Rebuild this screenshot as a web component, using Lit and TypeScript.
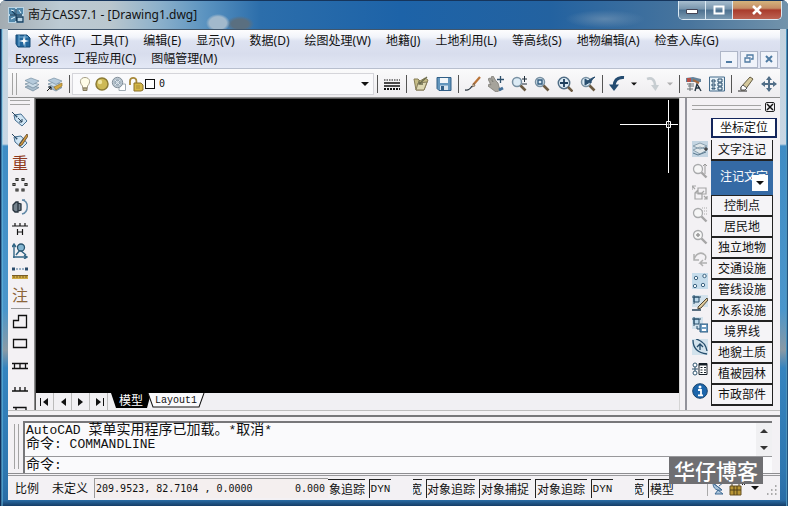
import { LitElement, html, css, svg, TemplateResult } from "lit";
import { customElement } from "lit/decorators.js";
import { classMap } from "lit/directives/class-map.js";

const lens = svg`<circle cx="6" cy="6" r="4.5" fill="#dcebf5" stroke="#7890a2" stroke-width="1.5"/><path d="M9.5 9.5l5 5" stroke="#6b5a42" stroke-width="2.6"/>`;
const greyLens = svg`<circle cx="6" cy="6" r="4.5" fill="#f6f6f6" stroke="#a9aaac" stroke-width="1.3"/><path d="M9.5 9.5l5 5" stroke="#a5a5a5" stroke-width="2.4"/>`;
const sheets = svg`<path d="M1 11l6-2 8 2.500-6 3.500z" fill="#a9bccb" stroke="#6f8799" stroke-width=".7"/><path d="M1 8l6-2 8 2.500-6 3.500z" fill="#cbdbe7" stroke="#6f8799" stroke-width=".7"/><path d="M1 4.500l6-2.500 8 3-6 3.500z" fill="#b5cadb" stroke="#7890a3" stroke-width=".7"/>`;
const tag = svg`<path d="M2 4l7-1 6 7-5 5-7-6z" fill="#cfe4f3" stroke="#466f91"/><path d="M0 1l4 4" stroke="#25445e"/><circle cx="4.500" cy="5.500" r="1" fill="#2b4a63"/>`;

const ICONS: Record<string, TemplateResult> = {
  app: svg`<path d="M0 0h16v16H0z" fill="#b9d4e5"/><path d="M1 1h6v6H1zM9 1h6v6H9zM1 9h6v6H1z" fill="#5187aa"/><path d="M2 8h12M8 2v12M4 4l3 3M9 10h6v5H9z" stroke="#163e5e" stroke-width="1.300" fill="none"/><path d="M3 3l3 1M11 3l2 3M3 12l4-2" stroke="#e6f6ff"/>`,
  doc: svg`<path d="M1 2h11l3 3v9H3l-2-3z" fill="#24679d" stroke="#164b77"/><path d="M4 2v11M4 4h9M10 2v12" stroke="#72add4"/><path d="M9 3l1 4 4 1-4 1-1 4-1-4-4-1 4-1z" fill="#fff"/>`,
  layers: sheets,
  layerprev: svg`${sheets}<path d="M7 11l8-4v3l-6 4z" fill="#d6a93f" stroke="#94722b" stroke-width=".7"/><path d="M0 15l4-4M1.500 11H4v3" stroke="#111" fill="none"/>`,
  bulb: svg`<path d="M5.500 10C2 6.500 3 1.500 8 1.500s6 5 2.500 8.500v2h-5z" fill="#fffde8" stroke="#a59e86"/><path d="M6 12h4v2.500H6z" fill="#b8b28d" stroke="#83795d"/>`,
  sun: svg`<circle cx="8" cy="8" r="6" fill="#cdb956" stroke="#8d7c35" stroke-width="1.500"/><circle cx="6" cy="6" r="2.200" fill="#efe4a1"/>`,
  freeze: svg`<path d="M8 8h6.500v6.500H8z" fill="#fff" stroke="#a0abb3"/><circle cx="6.500" cy="6.500" r="5.200" fill="#b8c4ce" stroke="#83909b"/><circle cx="6.500" cy="6.500" r="2.500" fill="none" stroke="#8fa0ae"/><path d="M4 4l5 5M9 4L4 9" stroke="#dde6ed"/>`,
  lock: svg`<path d="M2 9V5a3.200 3.200 0 0 1 6.400 0v3" fill="none" stroke="#a8893b" stroke-width="1.800"/><path d="M6 7h7l2 2v5l-2 1H6z" fill="#d4b747" stroke="#8a702b"/><path d="M8 10h4M8 12h4" stroke="#a98c3a"/>`,
  linetype: svg`<path d="M0 4h16" stroke="#111" stroke-dasharray="1.500 1"/><path d="M0 7h16M0 10h16" stroke="#111" stroke-width="1.500"/><path d="M0 13h16" stroke="#111" stroke-width="2" stroke-dasharray="2 1"/>`,
  open: svg`<path d="M1 3h4l2 2 5-3 3 2-4 10H3z" fill="#c5bc86" stroke="#867d55"/><path d="M3 14l2-7 9-1-3 8z" fill="#ddd8b2" stroke="#847b5b"/><path d="M14 1L6 8M6 4.500V8h4" fill="none" stroke="#6b6c4f" stroke-width="1.300"/>`,
  save: svg`<path d="M1 1.500h14v13H3l-2-2z" fill="#6396bd" stroke="#315f87"/><path d="M4 2h8v5H4z" fill="#f2f6f9"/><path d="M4 9.500h8V14H4z" fill="#d8e4ee"/><path d="M5 10h3v4H5z" fill="#315f87"/>`,
  brush: svg`<path d="M15 1L8 9" stroke="#b97337" stroke-width="2.300"/><path d="M9 7l-2 4 3-1z" fill="#dec3a0" stroke="#5f5041" stroke-width=".6"/><path d="M0 14q4 1 7-4" stroke="#2e3943" stroke-width="1.300" fill="none"/>`,
  pan: svg`<path d="M0 3l2-1 3 4-2-5 2-1 3 5 2 2 1 4 2 3-5 2-4-3-4-3 1-2 2 1z" fill="#a6a39b" stroke="#7c7b75" stroke-width=".8"/><path d="M12.500 0v7M9 3.500h7" stroke="#30516c" stroke-width="1.300"/><path d="M11 14l4-2" stroke="#436f99" stroke-width="3"/>`,
  zoomrt: svg`${lens}<path d="M11 3h5M13.500 0v6M11 8h5" stroke="#1f2d39"/>`,
  zoomwin: svg`${lens}<path d="M4 4h4v4H4z" fill="none" stroke="#315b7e" stroke-width="1.400"/>`,
  zoomext: svg`<circle cx="7" cy="7" r="5.700" fill="#dcebf5" stroke="#506d85" stroke-width="1.500"/><path d="M11 11l4.500 4.500" stroke="#6b5a42" stroke-width="2.500"/><path d="M3 7h8M7 3v8" stroke="#1d3f5e" stroke-width="1.800"/>`,
  zoomprev: svg`${lens}<path d="M5 9l0-6 3 2c2-2 4-3 7-4-3 2-4 4-4 6l-1-1z" fill="#294f70" stroke="#294f70"/>`,
  undo: svg`<path d="M15 1.500C9 1 5.500 4 5 10" fill="none" stroke="#244b70" stroke-width="3"/><path d="M0 8.500h10L5 15z" fill="#244b70"/>`,
  redo: svg`<path d="M3 3c5-2 8 1 8 7" fill="none" stroke="#c7cdd1" stroke-width="2.500"/><path d="M7 9h8l-3.500 6z" fill="#c7cdd1"/>`,
  match: svg`<path d="M0 2l7-1 8 2v3H0z" fill="#65839b"/><path d="M1 2h4v4H1z" fill="#b85148"/><path d="M1 8h7M2 10h6M1 13h6M4 7v8" stroke="#6d7479"/><path d="M9 15l2-7 4 7M10 12h4" stroke="#273642" stroke-width="1.400" fill="none"/><path d="M7 4l6 3" stroke="#a76b40" stroke-width="2"/>`,
  props: svg`<path d="M.5 1h15v14H.5z" fill="#e8f2f8" stroke="#436b8b"/><path d="M3 4h3v2H3zM3 8h3v2H3zM3 12h3v1H3zM9 3h4v3H9zM9 7h4v3H9zM9 11h4v3H9z" fill="none" stroke="#254a6a"/>`,
  erase: svg`<path d="M0 15h9" stroke="#252525"/><path d="M3 11L12 1l3 2-8 11H3z" fill="#d6c99d" stroke="#655d43"/><path d="M3 11l2-2 4 3-2 2H3z" fill="#fff" stroke="#555"/>`,
  move: svg`<path d="M8 1v14M1 8h14" stroke="#526f88" stroke-width="2"/><path d="M8 0l3 4H5zM8 16l3-4H5zM0 8l4-3v6zM16 8l-4-3v6z" fill="#526f88"/>`,
  tag: svg`${tag}<path d="M6 7l4 4M10 8v3H7" stroke="#243f57" fill="none"/>`,
  tagpen: svg`${tag}<path d="M15 1L8 10l-1 3 3-1 6-9z" fill="#d39a3c" stroke="#593d21" stroke-width=".8"/><path d="M8 11l4-6" stroke="#555" />`,
  ring: svg`<g fill="none" stroke="#2a2a27" stroke-width="1.200"><path d="M4 1.500h2v2H4zM10 1.500h2v2h-2zM1 6.500h2v2H1zM13 6.500h2v2h-2zM4 12h2v2H4zM10 12h2v2h-2z"/></g>`,
  orbit: svg`<path d="M1 6l3-3h2v10H3L1 11zM6 4l3 1v6l-3 1z" fill="#75828d" stroke="#26323d" stroke-width="1.300"/><path d="M10 1c7 1 7 12 0 14M10 15l3-1M10 1h3" stroke="#6289a7" stroke-width="1.500" fill="none"/>`,
  hdim: svg`<path d="M0 5h16M3 2v3M8 2v3M13 2v3M5.500 8v6M10.500 8v6M5.500 11h5" stroke="#151515" stroke-width="1.200" fill="none"/>`,
  axis: svg`<path d="M2 15V2M1 14h14M0 4l2-3 2 3M12 12l3 2-3 2" stroke="#326585" fill="none" stroke-width="1.400"/><path d="M4 12L8 7l6 5" stroke="#326585" stroke-width="1.500" fill="none"/><circle cx="9" cy="4.500" r="3.500" fill="#83b5d1" stroke="#28536e" stroke-width="1.300"/>`,
  ruler: svg`<path d="M0 4h3M13 4h3" stroke="#2b4b6b" stroke-width="3"/><path d="M4 4h8" stroke="#497499" stroke-dasharray="2 1"/><path d="M0 10h16v4H0z" fill="#d0ab43"/><path d="M0 10.500h16M2 10v3M5 10v3M8 10v3M11 10v3M14 10v3" stroke="#795c26"/>`,
  poly: svg`<path d="M1.500 6.500h5v-5h8v12h-13z" fill="none" stroke="#111" stroke-width="1.300"/>`,
  rect: svg`<path d="M1.500 3.500h13v8h-13z" fill="none" stroke="#111" stroke-width="1.300"/>`,
  rail: svg`<path d="M0 5.500h16M0 10.500h16M2.500 5v6M8 5v6M13.500 5v6" stroke="#111" stroke-width="1.300"/>`,
  comb: svg`<path d="M0 11h16M3 7v4M8 7v4M13 7v4" stroke="#111" stroke-width="1.300"/>`,
  bench: svg`<path d="M1 5.500h13V13M4 6v5M1 9.500h4" stroke="#111" stroke-width="1.300" fill="none"/>`,
  stack: svg`<path d="M0 0h16v16H0z" fill="#c4d5e2"/><path d="M1 5l7-3 7 3-7 3zM1 9l7-3 7 3-7 4z" fill="#e0e7ea" stroke="#899fae"/><path d="M1 12l5 2 8-3" stroke="#59788e" fill="none"/><path d="M12 8h4M14 6v4" stroke="#222"/>`,
  gz1: svg`${greyLens}<path d="M13 2v9M11 3l2-2 2 2" stroke="#999" fill="none"/>`,
  gbox: svg`<path d="M6 3h8v6H6zM3 8h7v6H3zM3 8l3-3M10 8l2-2M0 5V1h4M0 1l3 3M12 11l3 3M15 11v3h-3" fill="none" stroke="#a5a5a5" stroke-width="1.200"/>`,
  gz2: svg`${greyLens}<path d="M10 1h6M10 4h6M12 7h4" stroke="#aaa" stroke-dasharray="1 1"/>`,
  gz3: svg`${greyLens}<path d="M4 6h4M6 4v4" stroke="#999" stroke-width="1.500"/>`,
  gturn: svg`<path d="M2 3v6h5M2 9C3 3 9 0 13 4c1 1 1 3 0 5M15 12H8l3-3M8 12l3 3" fill="none" stroke="#b0b0b0" stroke-width="1.500"/>`,
  nodes: svg`<path d="M0 0h16v16H0z" fill="#c5dceb"/><g fill="#f5fafd" stroke="#3c6380"><circle cx="4" cy="5" r="1.700"/><circle cx="12.500" cy="3" r="1.700"/><circle cx="3" cy="13" r="1.700"/><circle cx="11" cy="12" r="1.700"/></g>`,
  edit: svg`<path d="M0 0h16v12H0z" fill="#d3e2ec"/><path d="M2 2h5v5H2zM0 2h9M2 0v9" fill="#bdd9eb" stroke="#274c68"/><path d="M15 3L6 12v2l3-1 7-8z" fill="#dfc99a" stroke="#4f4532"/><path d="M0 15h9" stroke="#28445c" stroke-width="1.500"/>`,
  blocksave: svg`<path d="M0 0h11v12H0z" fill="#d3e2ec"/><path d="M2 2h5v5H2zM0 2h9M2 0v9M5 9v3h3" fill="#bdd9eb" stroke="#274c68"/><path d="M8 7h8v8H8z" fill="#709fc4" stroke="#2c5c82"/><path d="M10 8h4v2h-4zM10 12h4v2h-4z" fill="#fff"/>`,
  curve: svg`<path d="M0 0h16v16H0z" fill="#d2e2ec"/><path d="M1 1c0 9 5 13 14 14M4 0c7 2 10 6 11 12M8 11V5M5 8l3-3 3 3" fill="none" stroke="#254d6c" stroke-width="1.300"/>`,
  list: svg`<circle cx="3" cy="4" r="2" fill="#fff" stroke="#31556f"/><circle cx="3" cy="12" r="2" fill="#fff" stroke="#31556f"/><path d="M3 6v4M0 8h6" stroke="#31556f"/><path d="M7 2.500h8v11H7z" fill="#fff" stroke="#171f27"/><path d="M7 3.500h8" stroke="#171f27" stroke-width="2"/><path d="M8.500 6.500h2M12 6.500h2M8.500 9h2M12 9h2M8.500 11.500h2M12 11.500h2" stroke="#171f27"/>`,
  info: svg`<circle cx="8" cy="8" r="7.300" fill="#1d66ac" stroke="#18446d"/><circle cx="8" cy="4" r="1.500" fill="#fff"/><path d="M6 7h3v5M6 12.300h5" stroke="#fff" stroke-width="1.800" fill="none"/>`,
  dish: svg`<path d="M2 3c0 6 4 8 9 7zM2 3l9 7M8 6l5-4M7 10l-3 4h8z" fill="#a9c4dc" stroke="#3f6b94"/><circle cx="13" cy="2.500" r="1.500" fill="#4379ab"/>`,
  tray: svg`<path d="M1 6h11v9H1z" fill="#b99635" stroke="#695222"/><path d="M3 6V3h7v3M5 6v9M8 6v9M1 10h11" stroke="#504019" fill="none"/><path d="M13.500 2v3M15.500 2v3" stroke="#222"/>`,
  down: svg`<path d="M4 6h8l-4 4z" fill="#111"/>`,
};

const icon = (name: string) => html`<svg class="icon" viewBox="0 0 16 16" aria-hidden="true">${ICONS[name]}</svg>`;

const MENUS = [
  "文件(F)", "工具(T)", "编辑(E)", "显示(V)", "数据(D)", "绘图处理(W)", "地籍(J)", "土地利用(L)",
  "等高线(S)", "地物编辑(A)", "检查入库(G)", "Express", "工程应用(C)", "图幅管理(M)",
];

const TOOLS = [
  "linetype", "|", "open", "save", "|", "brush", "pan", "zoomrt", "zoomwin", "zoomext", "zoomprev", "|",
  "undo", "v", "redo", "v-", "|", "match", "props", "|", "erase", "move",
];

const LEFT = ["tag", "tagpen", "重", "ring", "orbit", "hdim", "axis", "ruler", "注", "|", "poly", "rect", "rail", "comb", "bench"];
const RIGHT = ["stack", "gz1", "gbox", "gz2", "gz3", "gturn", "nodes", "edit", "blocksave", "curve", "list", "info"];
const LAYERS = ["控制点", "居民地", "独立地物", "交通设施", "管线设施", "水系设施", "境界线", "地貌土质", "植被园林", "市政部件"];

@customElement("app-root")
export class AppRoot extends LitElement {
  static styles = css`
    :host {
      display: block;
      font: 12px/16px "Noto Sans", "Noto Sans CJK SC", sans-serif;
      color: #111;
    }
    * { box-sizing: border-box; }
    button, select, input { font: inherit; color: inherit; margin: 0; padding: 0; border: 0; border-radius: 0; background: none; }
    .icon { width: 16px; height: 16px; flex: none; display: block; }
    .window {
      height: 100vh;
      display: flex;
      flex-direction: column;
      padding: 0 8px 6px;
      border-radius: 6px 6px 0 0;
      overflow: hidden;
      position: relative;
      background:
        linear-gradient(90deg, #12305a 1px, #6cc3e8 2px, transparent 3px, transparent calc(100% - 2px), #5cb4dd calc(100% - 2px), #12305a),
        linear-gradient(#a8bac8 0, #c3d3df 30px, #c8d7e4 144px, #3f8cc4 146px, #4b96cb 310px, #8a9aa5 350px, #3584bf 368px, #2e77b0 470px, #2a6da6 500px, #143c66);
    }
    .title {
      height: 29px;
      flex: none;
      display: flex;
      align-items: center;
      gap: 4px;
      margin: 0 -8px;
      padding: 0 6px 0 8px;
      border-top: 1px solid #16355c;
      background:
        radial-gradient(ellipse 12px 9px at 218px 22px, #a2b9cc 70%, transparent),
        radial-gradient(ellipse 14px 8px at 240px 23px, #5a6f80 60%, transparent),
        radial-gradient(ellipse 40px 9px at 605px 18px, #5d86ad, transparent),
        linear-gradient(90deg, #a3acb2 0, #bccad3 60px, #bac7ce 110px, #8bb0cb 160px, #5b93c0 205px, #2c6eab 260px, #1d63a8 400px, #2362a0 550px, #49759d 690px, #7293ab);
    }
    .title h1 { flex: 1; margin: 0; font-size: 12px; font-weight: 400; }
    .caption { align-self: flex-start; display: flex; height: 19px; border: 1px solid #dbe9f3; border-top: 0; border-radius: 0 0 5px 5px; overflow: hidden; }
    .caption button { width: 27px; display: grid; place-items: center; border-right: 1px solid #dbe9f3; background: linear-gradient(#a7bdce, #7895ad 45%, #4c708f 50%, #7b9ab2); }
    .caption .close { width: 48px; border: 0; background: linear-gradient(#d4b37c, #c58d65 40%, #a93b2c 50%, #bd6353); }
    .client { flex: 1; min-height: 0; display: flex; flex-direction: column; background: #f3f1f4; border-top: 1px solid #41566b; }
    .menu {
      flex: none;
      display: flex;
      flex-wrap: wrap;
      column-gap: 15px;
      align-items: center;
      padding: 2px 12px 0 7px;
      min-height: 39px;
      background: linear-gradient(#fdfdfe 0, #f2f4fa 7px, #dde2f1 11px, #d8dded 24px, #e3e8f5);
      border-bottom: 1px solid #b8bfce;
    }
    .menu button { line-height: 18px; white-space: nowrap; }
    .first { display: flex; align-items: center; gap: 7px; }
    .mdi { margin: 0 -10px 0 auto; display: flex; gap: 2px; }
    .mdi button { width: 18px; height: 17px; display: grid; place-items: center; border: 1px solid #aeb6c8; background: #f0f3fa; }
    .tools { flex: none; height: 29px; display: flex; align-items: center; padding-top: 1px; background: linear-gradient(#fafafb, #eeecef); border-bottom: 1px solid #8e8e8e; }
    .grip { width: 5px; height: 22px; margin: 0 3px 0 4px; border: solid #a3a3a3; border-width: 0 1px; flex: none; }
    .tool { width: 23px; height: 22px; flex: none; display: grid; place-items: center; }
    .drop { width: 12px; height: 22px; flex: none; display: grid; place-items: center; }
    .drop.off { opacity: .3; width: 13px; }
    .drop .icon { width: 12px; height: 12px; }
    .sep { width: 6px; height: 18px; flex: none; display: flex; justify-content: center; }
    .sep::before { content: ""; width: 1px; background: #555; }
    .combo { flex: 1; min-width: 0; height: 22px; display: flex; align-items: center; gap: 1px; padding: 0 0 0 4px; background: #fafafc; border: 1px solid #d5d5da; }
    .swatch { width: 10px; height: 10px; border: 1px solid #111; background: #fff; flex: none; }
    .combo select { flex: 1; min-width: 0; height: 20px; padding-left: 3px; appearance: none; font: 10px "DejaVu Sans Mono", monospace; }
    .main { flex: 1; min-height: 0; display: flex; border-bottom: 1px solid #bdbdbd; }
    .left { width: 27px; flex: none; overflow: hidden; display: flex; flex-direction: column; align-items: center; padding-right: 2px; border-right: 1px solid #8b8b8b; }
    .left button { height: 22px; flex: none; display: grid; place-items: center; }
    .left .glyph { font-size: 16px; line-height: 22px; color: #8f3a20; }
    .left .ochre { color: #8b6539; }
    .hgrip { width: 20px; height: 5px; margin: 2px 0 3px; border: solid #a3a3a3; border-width: 1px 0; flex: none; }
    .rule { width: 19px; height: 1px; margin: 2px 0; background: #999; flex: none; }
    .stage { flex: 1; min-width: 0; display: flex; flex-direction: column; border-left: 1px solid #555; }
    .canvas { flex: 1; min-height: 0; position: relative; background: #000; border-top: 1px solid #555; }
    .cross { position: absolute; right: 0; top: 1px; width: 60px; height: 74px; }
    .tabs { height: 17px; flex: none; display: flex; align-items: stretch; background: #f1f0f3; }
    .nav { width: 18px; border-right: 1px solid #bbb; display: grid; place-items: center; }
    .nav .icon, .arrows .icon { width: 12px; height: 12px; }
    .tab { position: relative; height: 15px; padding: 0 8px; line-height: 15px; }
    .tab svg { position: absolute; inset: 0; width: 100%; height: 100%; }
    .tab span { position: relative; }
    .tab.on { margin-left: 3px; color: #fff; }
    .tab.sheet { margin-left: -4px; font: 10px/15px "Liberation Mono", monospace; }
    .right { width: 101px; flex: none; padding: 0 4px 0 5px; display: flex; flex-direction: column; border-left: 1px solid #d5d5d5; }
    .dock { display: flex; flex-direction: column; padding-left: 5px; border-left: 2px solid #92929a; flex: 1; min-height: 0; }
    .head { display: flex; gap: 4px; align-items: center; height: 18px; flex: none; padding-right: 1px; }
    .head i { flex: 1; height: 5px; border: solid #a3a3a3; border-width: 1px 0; }
    .head button { width: 10px; height: 10px; border: 1px solid #222; border-radius: 2px; display: grid; place-items: center; }
    .head .icon { width: 8px; height: 8px; }
    .cols { display: flex; gap: 3px; }
    .icons { display: flex; flex-direction: column; padding-top: 22px; }
    .icons button { height: 22px; width: 16px; display: grid; place-items: center; }
    .list { width: 62px; display: flex; flex-direction: column; padding-top: 2px; }
    .list button { height: 21px; flex: none; text-align: center; line-height: 18px; background: #f5f4f7; border: 1px solid #222; border-width: 0 1px 2px 1px; white-space: nowrap; }
    .list .lead { width: 66px; height: 20px; margin-bottom: 2px; border: 2px solid #14265c; border-top-width: 1px; background: #fff; }
    .pick { position: relative; height: 35px; flex: none; }
    .pick select { width: 100%; height: 100%; appearance: none; padding: 0 0 2px 9px; background: #356aa5; color: #fff; border-bottom: 1px solid #222; }
    .pick .arrow { position: absolute; right: 5px; bottom: 5px; width: 16px; height: 16px; background: #fff; pointer-events: none; }
    .command { flex: none; height: 59px; margin-top: 4px; display: flex; padding: 4px 8px 0 2px; border-top: 2px solid #77777a; border-bottom: 1px solid #8d8d90; font: 13px/14px "Liberation Mono", "Noto Sans CJK SC", monospace; }
    .command .grip { height: auto; margin: 3px 4px 4px; }
    .cli { flex: 1; min-width: 0; display: flex; flex-direction: column; background: #fafafc; border: solid #77777a; border-width: 2px 0 0 2px; }
    .log { height: 34px; flex: none; display: flex; border-bottom: 1px solid #98989b; }
    .log output { flex: 1; white-space: pre; padding-left: 1px; }
    .cjk { font-size: 14px; }
    .log div { height: 14px; }
    .arrows { width: 16px; display: flex; flex-direction: column; justify-content: space-around; align-items: center; background: #f0f0f2; }
    .prompt { flex: 1; display: flex; align-items: center; padding-left: 1px; }
    .prompt input { flex: 1; min-width: 0; height: 14px; outline: 0; }
    .status { flex: none; height: 25px; display: flex; align-items: center; gap: 4px; padding: 2px 3px 2px 7px; margin-top: 1px; border-top: 1px solid #98989b; font-family: "Noto Sans CJK SC", sans-serif; }
    .status .scale { margin-right: 9px; }
    .coords { flex: 1; min-width: 0; height: 20px; margin: 0 -4px 0 2px; display: flex; justify-content: space-between; align-items: center; overflow: hidden; white-space: pre; padding: 0 3px 0 1px; border: solid #999; border-width: 1px 0 0 1px; font: 10px/16px "DejaVu Sans Mono", monospace; background: #f4efef; }
    .flag { height: 19px; flex: none; overflow: hidden; display: flex; justify-content: flex-end; align-items: center; white-space: nowrap; border: solid #222; border-width: 1px 0 0 1px; padding: 0 2px 0 1px; }
    .flag.mono { width: 22px; padding: 0; justify-content: center; font: 11px "Liberation Mono", monospace; }
    .w4 { width: 52px; }
    .w3 { width: 37px; border-left: 0; padding: 0; }
    .cut { width: 49px; padding: 0; }
    .w1 { width: 9px; margin-left: 18px; border-left: 0; padding: 0; }
    .w2 { width: 28px; }
    .tray { margin-left: 27px; display: flex; align-items: center; gap: 2px; padding-left: 3px; border-left: 1px solid #aaa; }
    .mark { position: absolute; right: 25px; bottom: 22px; height: 27px; padding: 0 5px; background: #6f6f72; color: #fff; font: 500 21px/26px "Noto Sans CJK SC", sans-serif; }
  `;

  private tool(name: string) {
    if (name === "|") return html`<span class="sep"></span>`;
    if (name[0] === "v") {
      return html`<button class=${classMap({ drop: true, off: name === "v-" })} aria-label="more">${icon("down")}</button>`;
    }
    return html`<button class="tool" aria-label=${name}>${icon(name)}</button>`;
  }

  private side(name: string) {
    if (name === "|") return html`<span class="rule"></span>`;
    const glyph = !(name in ICONS);
    return html`<button class=${classMap({ glyph, ochre: name === "注" })} aria-label=${name}>${glyph ? name : icon(name)}</button>`;
  }

  private flag(text: string, kind: string) {
    return html`<button class="flag ${kind}">${text}</button>`;
  }

  private nav(d: string, label: string) {
    return html`<button class="nav" aria-label=${label}><svg class="icon" viewBox="0 0 12 12"><path d=${d} fill="#111" /></svg></button>`;
  }

  render() {
    return html`
      <div class="window">
        <header class="title">
          ${icon("app")}
          <h1>南方CASS7.1 - [Drawing1.dwg]</h1>
          <div class="caption">
            <button aria-label="minimize"><svg width="12" height="10"><path d="M.5 4.500h11v4H.5z" fill="#fff" stroke="#445" /></svg></button>
            <button aria-label="maximize"><svg width="12" height="10"><path d="M1.500 1.500h9v7h-9z" fill="none" stroke="#fff" stroke-width="2" /></svg></button>
            <button class="close" aria-label="close"><svg width="12" height="10"><path d="M2 1l8 8M10 1L2 9" stroke="#fff" stroke-width="2.500" /></svg></button>
          </div>
        </header>
        <div class="client">
          <nav class="menu">
            ${MENUS.map((m, i) => (i ? html`<button>${m}</button>` : html`<span class="first">${icon("doc")}<button>${m}</button></span>`))}
            <span class="mdi">
              <button aria-label="minimize drawing"><svg width="10" height="10"><path d="M2 8h6" stroke="#4f7ba3" stroke-width="2" /></svg></button>
              <button aria-label="restore drawing"><svg width="10" height="10"><path d="M1 4h5v4H1zM3 3V1h6v4H7" fill="none" stroke="#4f7ba3" stroke-width="1.300" /></svg></button>
              <button aria-label="close drawing"><svg width="10" height="10"><path d="M2 2l6 6M8 2L2 8" stroke="#4f7ba3" stroke-width="2" /></svg></button>
            </span>
          </nav>
          <div class="tools">
            <span class="grip"></span>
            ${this.tool("layers")}${this.tool("layerprev")}${this.tool("|")}
            <div class="combo">
              ${["bulb", "sun", "freeze", "lock"].map(icon)}
              <span class="swatch"></span>
              <select aria-label="图层"><option>0</option></select>
              ${icon("down")}
            </div>
            ${this.tool("|")}${TOOLS.map((t) => this.tool(t))}
          </div>
          <div class="main">
            <aside class="left"><span class="hgrip"></span>${LEFT.map((t) => this.side(t))}</aside>
            <section class="stage">
              <div class="canvas">
                <svg class="cross" viewBox="0 0 60 74"><path d="M1 24.500h58M49.500 0v73" stroke="#fff" /><path d="M47.500 21.500h4v6h-4z" fill="#000" stroke="#fff" /><path d="M49.500 22v5M48 24.500h3" stroke="#999" /></svg>
              </div>
              <div class="tabs">
                ${this.nav("M1 2h1v8H1zM9 2v8L4 6z", "first")}
                ${this.nav("M9 2v8L4 6z", "previous")}
                ${this.nav("M3 2v8l5-4z", "next")}
                ${this.nav("M3 2v8l5-4zM10 2h1v8h-1z", "last")}
                <button class="tab on"><svg viewBox="0 0 40 15" preserveAspectRatio="none"><path d="M0 0h40l-4 15H5z" fill="#000" /></svg><span>模型</span></button>
                <button class="tab sheet"><svg viewBox="0 0 58 15" preserveAspectRatio="none"><path d="M1 0l5 14h46l5-14" fill="#fafafc" stroke="#111" /></svg><span>Layout1</span></button>
              </div>
            </section>
            <aside class="right">
              <div class="dock">
                <div class="head"><i></i><button aria-label="close panel"><svg class="icon" viewBox="0 0 8 8"><path d="M1 1l6 6M7 1L1 7" stroke="#111" stroke-width="1.500" /></svg></button></div>
                <div class="cols">
                  <div class="icons">${RIGHT.map((t) => html`<button aria-label=${t}>${icon(t)}</button>`)}</div>
                  <div class="list">
                    <button class="lead">坐标定位</button>
                    <button>文字注记</button>
                    <div class="pick"><select aria-label="文字注记"><option>注记文字</option></select><span class="arrow">${icon("down")}</span></div>
                    ${LAYERS.map((t) => html`<button>${t}</button>`)}
                  </div>
                </div>
              </div>
            </aside>
          </div>
          <section class="command">
            <span class="grip"></span>
            <div class="cli">
              <div class="log">
                <output><div>AutoCAD <span class="cjk">菜单实用程序已加载。</span>*<span class="cjk">取消</span>*</div><div><span class="cjk">命令</span>: COMMANDLINE</div></output>
                <span class="arrows">
                  <svg class="icon" viewBox="0 0 12 12"><path d="M2 8h8L6 4z" fill="#333" /></svg>
                  <svg class="icon" viewBox="0 0 12 12"><path d="M2 4h8L6 8z" fill="#333" /></svg>
                </span>
              </div>
              <div class="prompt"><label for="cmd"><span class="cjk">命令</span>:</label><input id="cmd" /></div>
            </div>
          </section>
          <footer class="status">
            <span class="scale">比例</span><span>未定义</span>
            <span class="coords"><span>209.9523, 82.7104 , 0.0000</span><span>0.000</span></span>
            ${this.flag("象追踪", "w3")}${this.flag("DYN", "mono")}${this.flag("宽", "w1")}${this.flag("对象追踪", "cut")}
            ${this.flag("对象捕捉", "w4")}${this.flag("对象追踪", "w4")}${this.flag("DYN", "mono")}${this.flag("宽", "w1")}${this.flag("模型", "w2")}
            <span class="tray">${icon("dish")}${icon("tray")}${icon("down")}<svg width="12" height="16">${[[10, 6], [10, 10], [6, 10], [10, 14], [6, 14], [2, 14]].map(([x, y]) => svg`<path d="M${x} ${y}h1.500" stroke="#aaa" stroke-width="2"/>`)}</svg></span>
          </footer>
        </div>
        <div class="mark">华仔博客</div>
      </div>
    `;
  }
}
